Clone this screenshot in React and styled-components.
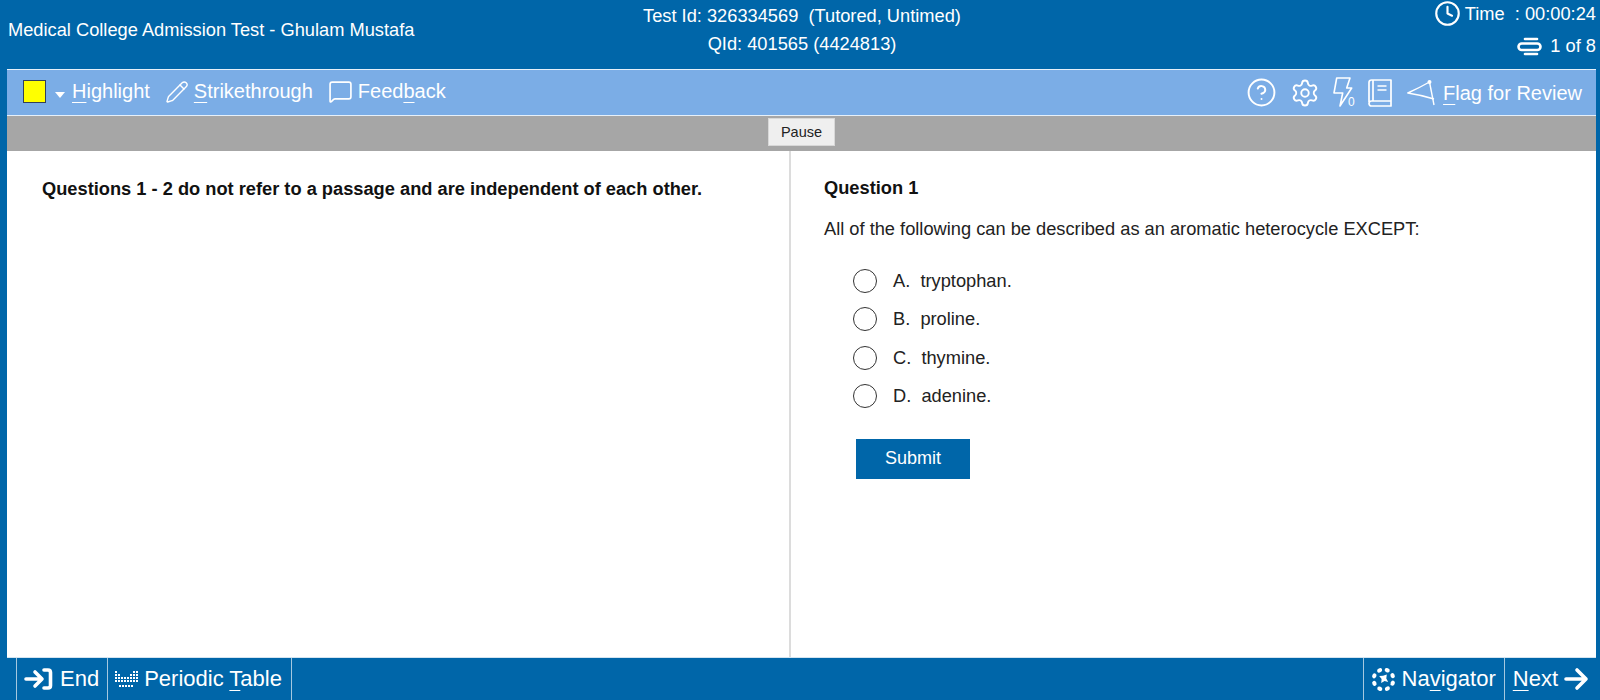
import React from 'react';
import styled, { createGlobalStyle } from 'styled-components';
import { Clock, Pencil, MessageSquare, CircleHelp, Settings } from 'lucide-react';

const GlobalStyle = createGlobalStyle`
  html, body { margin: 0; padding: 0; height: 100%; }
  body { font-family: "Liberation Sans", Arial, sans-serif; background: #0066a9; }
  #root { height: 100%; }
`;

const Page = styled.div`
  width: 1600px;
  height: 700px;
  display: flex;
  flex-direction: column;
  background: #0066a9;
  overflow: hidden;
`;

const Header = styled.header`
  height: 69px;
  flex: none;
  display: grid;
  grid-template-columns: 1fr 1fr 1fr;
  color: #fff;
  font-size: 18.25px;
  padding: 0 4px 0 8px;
`;

const Title = styled.div`
  display: flex;
  align-items: center;
  padding-bottom: 9px;
`;

const TestInfo = styled.div`
  display: flex;
  flex-direction: column;
  align-items: center;
  gap: 8px;
  padding-top: 6px;
  line-height: 20px;
  white-space: pre;
`;

const Status = styled.div`
  display: flex;
  flex-direction: column;
  align-items: flex-end;
  gap: 8px;
  line-height: 22px;
  white-space: pre;
`;

const StatusRow = styled.div`
  display: flex;
  align-items: center;
  gap: ${(p) => p.$gap}px;
`;

const Main = styled.div`
  flex: 1;
  display: flex;
  flex-direction: column;
  margin: 0 4px 0 7px;
  min-height: 0;
`;

const Toolbar = styled.div`
  height: 45px;
  flex: none;
  display: flex;
  align-items: center;
  justify-content: space-between;
  background: #7bade6;
  border-top: 1px solid #e6f0fa;
  border-bottom: 1px solid #e6f0fa;
  padding: 0 14px 0 16px;
  color: #fff;
  font-size: 20px;
`;

const ToolGroup = styled.div`
  display: flex;
  align-items: center;
  padding-bottom: ${(p) => p.$lift ?? 0}px;
`;

const Tool = styled.div`
  display: flex;
  align-items: center;
  gap: ${(p) => p.$gap ?? 4}px;
  margin-left: ${(p) => p.$left ?? 0}px;
  white-space: pre;
`;

const FlagLabel = styled.span`
  padding-top: 2px;
`;

const Key = styled.span`
  text-decoration: underline;
  text-decoration-thickness: 1px;
  text-underline-offset: 4px;
`;

const Swatch = styled.span`
  width: 23px;
  height: 23px;
  box-sizing: border-box;
  background: #ffff00;
  border: 1px solid #33405a;
`;

const Caret = styled.span`
  width: 0;
  height: 0;
  margin: 7px 0 0 9px;
  border-left: 5.5px solid transparent;
  border-right: 5.5px solid transparent;
  border-top: 6px solid #fff;
`;

const PauseBar = styled.div`
  height: 35px;
  flex: none;
  display: flex;
  justify-content: center;
  background: #a6a6a6;
`;

const PauseButton = styled.button`
  width: 67px;
  height: 28px;
  margin-top: 2px;
  padding: 0;
  border: 1px solid #d8d8d8;
  background: #efefef;
  color: #222;
  font-family: inherit;
  font-size: 14.5px;
`;

const Panes = styled.div`
  flex: 1;
  display: grid;
  grid-template-columns: 784px 1fr;
  background: #fff;
  min-height: 0;
`;

const Passage = styled.div`
  border-right: 2px solid #dcdcdc;
  padding: 28px 0 0 35px;
  font-size: 18.25px;
  font-weight: bold;
  line-height: 20px;
  color: #111;
`;

const QuestionPane = styled.div`
  padding: 27px 0 0 33px;
  color: #222;
  font-size: 18.25px;
`;

const QuestionTitle = styled.div`
  font-weight: bold;
  line-height: 20px;
  color: #111;
`;

const Stem = styled.div`
  margin-top: 21px;
  line-height: 20px;
`;

const Choices = styled.div`
  display: flex;
  flex-direction: column;
  gap: 14.3px;
  margin: 30px 0 0 29px;
`;

const Choice = styled.label`
  display: flex;
  align-items: center;
  gap: 16px;
  height: 24px;
  white-space: pre;
`;

const Radio = styled.span`
  width: 24px;
  height: 24px;
  box-sizing: border-box;
  border: 1px solid #333;
  border-radius: 50%;
  background: #fff;
`;

const SubmitButton = styled.button`
  display: block;
  width: 114px;
  height: 40px;
  margin: 31px 0 0 32px;
  padding: 0;
  border: none;
  background: #0066a9;
  color: #fff;
  font-family: inherit;
  font-size: 18px;
`;

const Footer = styled.footer`
  height: 42px;
  flex: none;
  display: flex;
  justify-content: space-between;
  border-top: 1px solid #d4e4f0;
  margin: 0 4px 0 7px;
  padding-left: 9px;
  color: #fff;
  font-size: 22px;
`;

const FooterGroup = styled.div`
  display: flex;
`;

const FooterButton = styled.div`
  display: flex;
  align-items: center;
  gap: ${(p) => p.$gap}px;
  padding: 0 ${(p) => p.$right ?? 8}px 0 ${(p) => p.$pad ?? 7}px;
  border-left: 1px solid #a5c8e0;
  border-right: ${(p) => (p.$closed ? '1px solid #a5c8e0' : 'none')};
  white-space: pre;
`;

// rows filled per column, same outline as the real table: high on both sides, low in the middle
const PERIODIC_COLUMNS = [
  [0, 1, 2, 3], [1, 2, 3], [2, 3], [2, 3], [2, 3], [1, 2, 3], [0, 1, 2, 3], [0, 1, 2, 3],
];

const EndIcon = () => (
  <svg width="30" height="24" viewBox="0 0 30 24" fill="none" stroke="#fff" strokeWidth="3.6" strokeLinecap="round" strokeLinejoin="round">
    <path d="M2 12h15M11 5l7 7-7 7" />
    <path d="M20 3h4c1.5 0 2.5 1 2.5 2.5v13c0 1.5-1 2.5-2.5 2.5h-4" />
  </svg>
);

const PeriodicIcon = () => (
  <svg width="23" height="16" viewBox="0 0 23 16" fill="#fff">
    {PERIODIC_COLUMNS.map((rows, c) =>
      rows.map((r) => <rect key={`${c}-${r}`} x={c * 3} y={r * 3} width="2" height="2" />)
    )}
    {[4, 7, 10, 13, 16].map((x) => (
      <rect key={x} x={x} y="14" width="2" height="2" />
    ))}
  </svg>
);

const NavigatorIcon = () => (
  <svg width="25" height="25" viewBox="0 0 25 25" fill="#fff">
    {[0, 45, 90, 135, 180, 225, 270, 315].map((a) => (
      <ellipse key={a} cx="12.5" cy="2.6" rx="2.6" ry="2.1" transform={`rotate(${a + 22} 12.5 12.5)`} />
    ))}
    <path d="M15.8 7.6l-.5 4 1.9 3.4-3.6-1-3.4 2 .4-4-2.4-3 3.8-.2z" />
  </svg>
);

const ArrowIcon = () => (
  <svg width="25" height="24" viewBox="0 0 25 24" fill="none" stroke="#fff" strokeWidth="3.6" strokeLinecap="round" strokeLinejoin="round">
    <path d="M2 12h20M13 3l9 9-9 9" />
  </svg>
);

const StackIcon = () => (
  <svg width="25" height="19" viewBox="0 0 25 19" fill="none" stroke="#fff" strokeWidth="2.6" strokeLinecap="round">
    <path d="M8 2h12" />
    <rect x="1.5" y="6.5" width="22" height="6.5" rx="3.25" />
    <path d="M8 17h12" />
  </svg>
);

const BoltIcon = () => (
  <svg width="24" height="32" viewBox="0 0 24 32" fill="none" stroke="#fff" strokeWidth="1.6" strokeLinejoin="round">
    <path d="M3.7 1H17l-3.3 10h5L7 29l2.7-13H1z" />
    <text x="15" y="29" fill="#fff" stroke="none" fontSize="12" fontFamily="Liberation Sans">0</text>
  </svg>
);

const BookIcon = () => (
  <svg width="26" height="28" viewBox="0 0 26 28" fill="none" stroke="#fff" strokeWidth="1.7" strokeLinejoin="round">
    <path d="M2 23V3.5C2 2 3 1 4.5 1H24v26H4.5C3 27 2 26 2 24.5S3 22 4.5 22H24" />
    <path d="M6 1v21M10.5 7h9M10.5 11h9" />
  </svg>
);

const FlagIcon = () => (
  <svg width="28" height="26" viewBox="0 0 28 26" fill="none" stroke="#fff" strokeWidth="1.4" strokeLinejoin="round">
    <path d="M22.5 2Q12 8 .8 13 14 15 27 19" />
    <path d="M22.5 2 27 25" />
    <circle cx="22.5" cy="2" r="1.3" fill="#fff" />
  </svg>
);

const App = () => (
  <Page>
    <GlobalStyle />
    <Header>
      <Title>Medical College Admission Test - Ghulam Mustafa</Title>
      <TestInfo>
        <div>Test Id: 326334569  (Tutored, Untimed)</div>
        <div>QId: 401565 (4424813)</div>
      </TestInfo>
      <Status>
        <StatusRow $gap={4}>
          <Clock size={27} strokeWidth={1.9} />
          <span>Time  : 00:00:24</span>
        </StatusRow>
        <StatusRow $gap={8}>
          <StackIcon />
          <span>1 of 8</span>
        </StatusRow>
      </Status>
    </Header>
    <Main>
      <Toolbar>
        <ToolGroup $lift={2}>
          <Swatch />
          <Caret />
          <Tool $left={7}><span><Key>H</Key>ighlight</span></Tool>
          <Tool $left={15} $gap={5}>
            <Pencil size={24} strokeWidth={1.4} />
            <span><Key>S</Key>trikethrough</span>
          </Tool>
          <Tool $left={15} $gap={5}>
            <MessageSquare size={25} strokeWidth={1.6} />
            <span>Feed<Key>b</Key>ack</span>
          </Tool>
        </ToolGroup>
        <ToolGroup>
          <CircleHelp size={31} strokeWidth={1.5} />
          <Tool $left={13}><Settings size={30} strokeWidth={1.5} /></Tool>
          <Tool $left={13}><BoltIcon /></Tool>
          <Tool $left={10}><BookIcon /></Tool>
          <Tool $left={14} $gap={8}>
            <FlagIcon />
            <FlagLabel><Key>F</Key>lag for Review</FlagLabel>
          </Tool>
        </ToolGroup>
      </Toolbar>
      <PauseBar>
        <PauseButton>Pause</PauseButton>
      </PauseBar>
      <Panes>
        <Passage>Questions 1 - 2 do not refer to a passage and are independent of each other.</Passage>
        <QuestionPane>
          <QuestionTitle>Question 1</QuestionTitle>
          <Stem>All of the following can be described as an aromatic heterocycle EXCEPT:</Stem>
          <Choices>
            <Choice><Radio /><span>A.  tryptophan.</span></Choice>
            <Choice><Radio /><span>B.  proline.</span></Choice>
            <Choice><Radio /><span>C.  thymine.</span></Choice>
            <Choice><Radio /><span>D.  adenine.</span></Choice>
          </Choices>
          <SubmitButton>Submit</SubmitButton>
        </QuestionPane>
      </Panes>
    </Main>
    <Footer>
      <FooterGroup>
        <FooterButton $gap={6} $right={8}>
          <EndIcon />
          <span>End</span>
        </FooterButton>
        <FooterButton $closed $gap={6} $right={9}>
          <PeriodicIcon />
          <span>Periodic <Key>T</Key>able</span>
        </FooterButton>
      </FooterGroup>
      <FooterGroup>
        <FooterButton $gap={6}>
          <NavigatorIcon />
          <span>Na<Key>v</Key>igator</span>
        </FooterButton>
        <FooterButton $gap={6} $pad={8} $right={7}>
          <span><Key>N</Key>ext</span>
          <ArrowIcon />
        </FooterButton>
      </FooterGroup>
    </Footer>
  </Page>
);

export default App;
